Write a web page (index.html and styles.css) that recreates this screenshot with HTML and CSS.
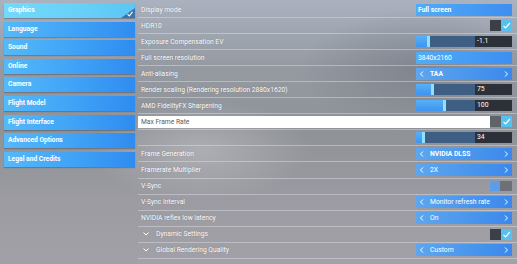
FILE: index.html
```html
<!DOCTYPE html>
<html lang="en">
<head>
  <meta charset="UTF-8">
  <title>Options - Graphics</title>
  <meta name="viewport" content="width=device-width, initial-scale=1.0">
  <link rel="stylesheet" href="styles.css">
</head>
<body>

  <div class="screen">

    <!-- Category menu -->
    <nav class="menu">
      <div class="menu-item active">Graphics
        <span class="corner">
          <svg width="14" height="10" viewBox="0 0 14 10"><path d="M14 0 L14 10 L0 10 Z" fill="#3b74b3"/><path d="M6.5 6.2 L8.3 8 L11.5 3.8" fill="none" stroke="#fff" stroke-width="1.1"/></svg>
        </span>
      </div>
      <div class="menu-item">Language</div>
      <div class="menu-item">Sound</div>
      <div class="menu-item">Online</div>
      <div class="menu-item">Camera</div>
      <div class="menu-item">Flight Model</div>
      <div class="menu-item">Flight Interface</div>
      <div class="menu-item">Advanced Options</div>
      <div class="menu-item">Legal and Credits</div>
    </nav>

    <!-- Settings list -->
    <section class="settings">
      <div class="row">
        <span class="label">Display mode</span>
        <div class="value plain bold">Full screen</div>
      </div>
      <div class="row">
        <span class="label">HDR10</span>
        <div class="check"><span class="box-off"></span><span class="box-on"><svg width="11" height="11" viewBox="0 0 11 11"><path d="M2.5 5.8 L4.6 7.9 L8.8 3" fill="none" stroke="#fff" stroke-width="1.2"/></svg></span></div>
      </div>
      <div class="row">
        <span class="label">Exposure Compensation EV</span>
        <div class="slider"><div class="track"><span class="fill" style="width:11px"></span><span class="knob"></span></div><span class="num">-1.1</span></div>
      </div>
      <div class="row">
        <span class="label">Full screen resolution</span>
        <div class="value plain">3840x2160</div>
      </div>
      <div class="row">
        <span class="label">Anti-aliasing</span>
        <div class="value picker">
          <svg class="arrow" width="13" height="12" viewBox="0 0 13 12"><path d="M7 3.5 L4.5 6 L7 8.5" fill="none" stroke="#fff" stroke-width="1"/></svg>
          <span class="pick-text bold">TAA</span>
          <svg class="arrow" width="13" height="12" viewBox="0 0 13 12"><path d="M6 3.5 L8.5 6 L6 8.5" fill="none" stroke="#fff" stroke-width="1"/></svg>
        </div>
      </div>
      <div class="row">
        <span class="label">Render scaling (Rendering resolution 2880x1620)</span>
        <div class="slider"><div class="track"><span class="fill" style="width:15px"></span><span class="knob"></span></div><span class="num">75</span></div>
      </div>
      <div class="row">
        <span class="label">AMD FidelityFX Sharpening</span>
        <div class="slider"><div class="track"><span class="fill" style="width:27px"></span><span class="knob"></span></div><span class="num">100</span></div>
      </div>
      <div class="row">
        <div class="field">Max Frame Rate</div>
        <div class="check"><span class="box-off light"></span><span class="box-on"><svg width="11" height="11" viewBox="0 0 11 11"><path d="M2.5 5.8 L4.6 7.9 L8.8 3" fill="none" stroke="#fff" stroke-width="1.2"/></svg></span></div>
      </div>
      <div class="row">
        <span class="label"></span>
        <div class="slider"><div class="track"><span class="fill" style="width:6px"></span><span class="knob"></span></div><span class="num">34</span></div>
      </div>
      <div class="row">
        <span class="label">Frame Generation</span>
        <div class="value picker">
          <svg class="arrow" width="13" height="12" viewBox="0 0 13 12"><path d="M7 3.5 L4.5 6 L7 8.5" fill="none" stroke="#fff" stroke-width="1"/></svg>
          <span class="pick-text bold">NVIDIA DLSS</span>
          <svg class="arrow" width="13" height="12" viewBox="0 0 13 12"><path d="M6 3.5 L8.5 6 L6 8.5" fill="none" stroke="#fff" stroke-width="1"/></svg>
        </div>
      </div>
      <div class="row">
        <span class="label">Framerate Multiplier</span>
        <div class="value picker">
          <svg class="arrow" width="13" height="12" viewBox="0 0 13 12"><path d="M7 3.5 L4.5 6 L7 8.5" fill="none" stroke="#fff" stroke-width="1"/></svg>
          <span class="pick-text">2X</span>
          <svg class="arrow" width="13" height="12" viewBox="0 0 13 12"><path d="M6 3.5 L8.5 6 L6 8.5" fill="none" stroke="#fff" stroke-width="1"/></svg>
        </div>
      </div>
      <div class="row">
        <span class="label">V-Sync</span>
        <div class="toggle"><span class="t-on"></span><span class="t-off"></span></div>
      </div>
      <div class="row">
        <span class="label">V-Sync Interval</span>
        <div class="value picker">
          <svg class="arrow" width="13" height="12" viewBox="0 0 13 12"><path d="M7 3.5 L4.5 6 L7 8.5" fill="none" stroke="#fff" stroke-width="1"/></svg>
          <span class="pick-text">Monitor refresh rate</span>
          <svg class="arrow" width="13" height="12" viewBox="0 0 13 12"><path d="M6 3.5 L8.5 6 L6 8.5" fill="none" stroke="#fff" stroke-width="1"/></svg>
        </div>
      </div>
      <div class="row">
        <span class="label">NVIDIA reflex low latency</span>
        <div class="value picker">
          <svg class="arrow" width="13" height="12" viewBox="0 0 13 12"><path d="M7 3.5 L4.5 6 L7 8.5" fill="none" stroke="#fff" stroke-width="1"/></svg>
          <span class="pick-text">On</span>
          <svg class="arrow" width="13" height="12" viewBox="0 0 13 12"><path d="M6 3.5 L8.5 6 L6 8.5" fill="none" stroke="#fff" stroke-width="1"/></svg>
        </div>
      </div>
      <div class="row">
        <span class="label"><svg class="chev" width="12" height="8" viewBox="0 0 12 8"><path d="M2.5 2.5 L5 5 L7.5 2.5" fill="none" stroke="#fff" stroke-width="1"/></svg>Dynamic Settings</span>
        <div class="check"><span class="box-off"></span><span class="box-on"><svg width="11" height="11" viewBox="0 0 11 11"><path d="M2.5 5.8 L4.6 7.9 L8.8 3" fill="none" stroke="#fff" stroke-width="1.2"/></svg></span></div>
      </div>
      <div class="row">
        <span class="label"><svg class="chev" width="12" height="8" viewBox="0 0 12 8"><path d="M2.5 2.5 L5 5 L7.5 2.5" fill="none" stroke="#fff" stroke-width="1"/></svg>Global Rendering Quality</span>
        <div class="value picker">
          <svg class="arrow" width="13" height="12" viewBox="0 0 13 12"><path d="M7 3.5 L4.5 6 L7 8.5" fill="none" stroke="#fff" stroke-width="1"/></svg>
          <span class="pick-text">Custom</span>
          <svg class="arrow" width="13" height="12" viewBox="0 0 13 12"><path d="M6 3.5 L8.5 6 L6 8.5" fill="none" stroke="#fff" stroke-width="1"/></svg>
        </div>
      </div>
    </section>

  </div>

</body>
</html>
```

FILE: styles.css
```css
body {
  margin: 0;
  width: 517px;
  height: 264px;
  overflow: hidden;
  font-family: Roboto, "Liberation Sans", Arial, sans-serif;
  background:
    radial-gradient(ellipse 120px 60px at 420px 70px, rgba(110,116,126,0.55), transparent),
    radial-gradient(ellipse 110px 50px at 200px 150px, rgba(200,200,204,0.5), transparent),
    linear-gradient(180deg, #aab2bf 0%, #959aa2 25%, #8f9297 50%, #9b9ba1 75%, #a2a1a7 100%);
}
.screen {
  display: flex;
  gap: 3px;
  padding-left: 4px;
}
.menu {
  width: 131px;
  padding-top: 3px;
  display: flex;
  flex-direction: column;
  gap: 3.6px;
}
.menu-item {
  position: relative;
  height: 15px;
  line-height: 15px;
  padding-left: 4px;
  font-size: 6.7px;
  font-weight: bold;
  color: #fff;
  background: linear-gradient(90deg, #55b9f9 0%, #3fa2f6 55%, #2f8cf0 100%);
  box-shadow: 0 1px 1px rgba(40,60,90,0.35);
}
.menu-item.active {
  background: linear-gradient(90deg, #74d9fb 0%, #66d0f8 60%, #5cc6f5 100%);
}
.corner {
  position: absolute;
  right: 0;
  bottom: 0;
  height: 10px;
}
.settings {
  flex: 1;
  padding-top: 2px;
}
.row {
  height: 15.05px;
  border-bottom: 1px solid rgba(225,228,234,0.45);
  display: flex;
  align-items: center;
  padding-left: 3px;
  padding-right: 5px;
  font-size: 6.7px;
  color: #fff;
}
.label {
  flex: 1;
  display: flex;
  align-items: center;
  text-shadow: 0 0 1px rgba(60,60,70,0.4);
}
.chev {
  margin-right: 3px;
}
.field {
  flex: 1;
  height: 12px;
  line-height: 12px;
  margin-left: -3px;
  padding-left: 3px;
  background: #fff;
  color: #5a5d62;
}
.value {
  width: 96px;
  height: 12px;
  line-height: 12px;
  color: #fff;
  font-size: 6.8px;
}
.plain {
  padding-left: 2px;
  box-sizing: border-box;
  background: linear-gradient(90deg, #52abf6, #3d8ff1);
}
.bold {
  font-weight: bold;
}
.picker {
  display: flex;
  align-items: center;
  background: linear-gradient(90deg, #5ea6ee, #4592ec 70%, #3a88ee);
}
.arrow {
  display: block;
}
.pick-text {
  flex: 1;
  padding-left: 1px;
}
.check {
  display: flex;
  height: 11px;
}
.box-off {
  width: 11px;
  background: #3b3f47;
}
.box-off.light {
  background: #5f636a;
}
.box-on {
  width: 11px;
  background: #56c0ef;
}
.toggle {
  display: flex;
  height: 10px;
}
.t-on {
  width: 10px;
  background: #5d9ce6;
}
.t-off {
  width: 12px;
  background: #6e7076;
}
.slider {
  width: 96px;
  height: 11px;
  display: flex;
}
.track {
  flex: 1;
  display: flex;
  background: #3e5e84;
}
.fill {
  background: linear-gradient(180deg, #58b0f8, #3d95ef);
}
.knob {
  width: 3px;
  background: #8fe2ff;
}
.num {
  width: 37px;
  padding-left: 2px;
  box-sizing: border-box;
  line-height: 11px;
  background: #2c3039;
  color: #fff;
  font-size: 6.8px;
}
```
